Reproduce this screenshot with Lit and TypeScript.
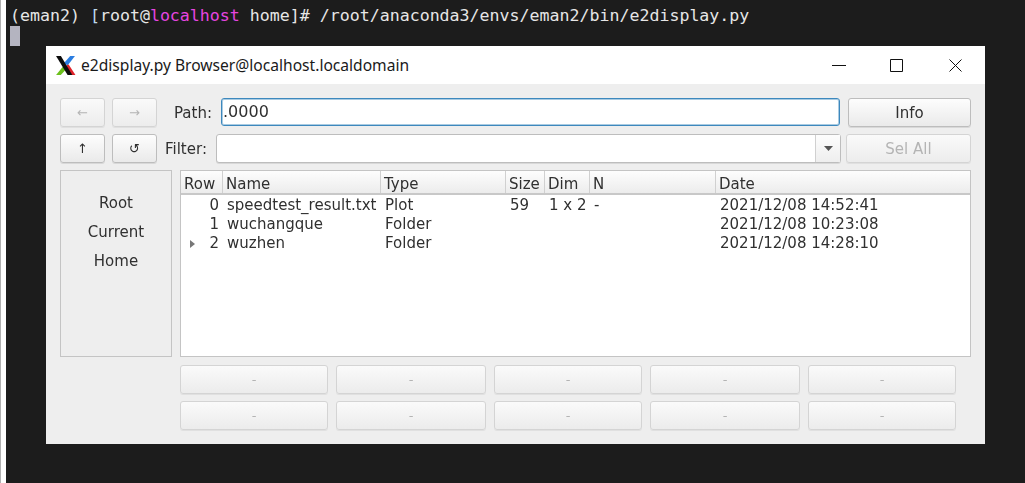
import { LitElement, html, css } from "lit";
import { customElement } from "lit/decorators.js";

const COLS = ["Row", "Name", "Type", "Size", "Dim", "N", "Date"];
const ROWS = [
  { row: "0", name: "speedtest_result.txt", type: "Plot", size: "59", dim: "1 x 2", n: "-", date: "2021/12/08 14:52:41", kids: false },
  { row: "1", name: "wuchangque", type: "Folder", size: "", dim: "", n: "", date: "2021/12/08 10:23:08", kids: false },
  { row: "2", name: "wuzhen", type: "Folder", size: "", dim: "", n: "", date: "2021/12/08 14:28:10", kids: true },
];

@customElement("app-root")
export class AppRoot extends LitElement {
  static styles = css`
    :host { display: block; width: 1025px; height: 483px; overflow: hidden; background: #1c1c1c; }
    .stage { display: flex; height: 483px; }
    .strip { width: 5px; flex: none; background: #fff; border-left: 1px solid #b0b0b0; }
    .term { flex: 1; min-width: 0; }
    .line { height: 20px; padding-left: 4px; font: 16.6px/20px "DejaVu Sans Mono", monospace; color: #e6e6e6; white-space: pre; margin-top: 6px; }
    .line .br { color: #bcd8ea; }
    .line .host { color: #e645e0; }
    .cursor { width: 10px; height: 20px; margin-left: 4px; background: #b4b4c0; }
    .win { width: 939px; height: 398px; margin-left: 40px; background: #eee; display: flex; flex-direction: column; }
    .title { height: 38px; flex: none; background: #fff; display: flex; align-items: center; padding-left: 9px; color: #1a1a1a; font: 15.6px/36px "Noto Sans", sans-serif; }
    .title .logo { width: 21px; height: 21px; margin-right: 5px; flex: none; }
    .title .name { flex: 1; }
    .ctl { display: flex; align-items: center; margin-right: 23px; }
    .ctl svg { display: block; }
    .ctl .min { width: 14px; height: 14px; margin-right: 44px; }
    .ctl .max { width: 13px; height: 13px; margin-right: 46px; }
    .ctl .cls { width: 13px; height: 13px; }
    .client { flex: 1; padding: 14px; display: flex; flex-direction: column; gap: 7px; font: 15px "DejaVu Sans", sans-serif; color: #303030; filter: blur(0.35px); }
    .bar { display: flex; height: 29px; flex: none; align-items: stretch; }
    button {
      box-sizing: border-box; margin: 0; padding: 0; font: inherit; color: #303030;
      border: 1px solid #bdbdbd; border-radius: 3px;
      background: linear-gradient(#fdfdfd, #eaeaea);
      box-shadow: 0 1px 0 #d8d8d8;
    }
    button:disabled { color: #b4b4b4; border-color: #d4d4d4; box-shadow: 0 1px 0 #e0e0e0; background: linear-gradient(#fafafa, #ececec); }
    .nav { width: 45px; flex: none; margin-right: 7px; font-size: 13px; }
    .lab { flex: none; align-self: center; }
    .lab.path { width: 47px; box-sizing: border-box; margin-left: 10px; }
    .lab.filter { width: 51px; box-sizing: border-box; margin-left: 1px; }
    .input { box-sizing: border-box; height: 28px; width: 619px; flex: none; background: #fff; border: 1px solid #3d88bd; border-radius: 3px; padding-left: 1px; line-height: 26px; box-shadow: 0 0 0 1px #a9cbe2 inset; font-size: 16px; }
    .info { width: 123px; flex: none; margin-left: 8px; }
    .combo { box-sizing: border-box; width: 625px; flex: none; background: #fff; border: 1px solid #bdbdbd; border-radius: 3px; display: flex; justify-content: flex-end; box-shadow: 0 1px 0 #d8d8d8; }
    .drop { width: 24px; border-left: 1px solid #d0d0d0; display: flex; align-items: center; justify-content: center; background: linear-gradient(#fdfdfd, #eeeeee); }
    .drop svg { width: 9px; height: 5px; }
    .selall { width: 125px; flex: none; margin-left: 5px; }
    .main { display: flex; gap: 8px; height: 187px; flex: none; }
    .places { box-sizing: border-box; width: 112px; flex: none; border: 1px solid #c4c4c4; padding-top: 17px; display: flex; flex-direction: column; align-items: center; }
    .places div { height: 29px; line-height: 31px; }
    .table { box-sizing: border-box; flex: 1; border: 1px solid #c4c4c4; background: #fff; display: flex; flex-direction: column; }
    .grid { display: grid; grid-template-columns: 42px 158px 125px 39px 45px 126px 1fr; }
    .head { height: 24px; box-sizing: border-box; background: linear-gradient(#fdfdfd, #ececec); border-bottom: 2px solid #c8c8c8; }
    .head div { height: 22px; padding-left: 3px; line-height: 26px; border-right: 1px solid #d0d0d0; box-sizing: border-box; white-space: nowrap; }
    .head div:last-child { border-right: none; }
    .rows { padding-top: 1px; }
    .row { height: 19px; line-height: 19px; }
    .row > div { padding-left: 4px; white-space: nowrap; }
    .row .num { padding: 0 4px 0 9px; display: flex; justify-content: space-between; align-items: center; box-sizing: border-box; }
    .row .num svg { width: 5px; height: 8px; flex: none; }
    .row .num span { margin-left: auto; }
    .grid5 { display: grid; grid-template-columns: 148px 150px 148px 150px 148px; gap: 7px 8px; margin-left: 120px; margin-top: 1px; }
    .grid5 button { height: 29px; font-size: 13px; }
  `;

  render() {
    return html`<div class="stage">
      <div class="strip"></div>
      <div class="term">
        <div class="line">(eman2) <span class="br">[</span>root@<span class="host">localhost</span> home]# /root/anaconda3/envs/eman2/bin/e2display.py</div>
        <div class="cursor"></div>
        <div class="win">
          <div class="title">
            <svg class="logo" viewBox="0 0 20 20">
              <path d="M12 10 L19 1 L14.5 1 L8.6 7.6 Z" fill="#2a7de1"/>
              <path d="M8 10.5 L1 19 L5.5 19 L11 13 Z" fill="#6cc01c"/>
              <path d="M10.5 10 L15.5 19 L19.5 19 L13 9 Z" fill="#e0222a"/>
              <path d="M1 1 L5.6 1 L16.5 19 L12 19 Z" fill="#0c0c0c"/>
            </svg>
            <span class="name">e2display.py Browser@localhost.localdomain</span>
            <div class="ctl">
              <svg class="min" viewBox="0 0 14 14"><path d="M0 7.5H14" stroke="#111" fill="none"/></svg>
              <svg class="max" viewBox="0 0 13 13"><path d="M.5 .5H12.5V12.5H.5Z" stroke="#111" fill="none"/></svg>
              <svg class="cls" viewBox="0 0 13 13"><path d="M.5 .5L12.5 12.5M12.5 .5L.5 12.5" stroke="#111" fill="none"/></svg>
            </div>
          </div>
          <div class="client">
            <div class="bar">
              <button class="nav" disabled>←</button>
              <button class="nav" disabled>→</button>
              <span class="lab path">Path:</span>
              <div class="input">.0000</div>
              <button class="info">Info</button>
            </div>
            <div class="bar">
              <button class="nav">↑</button>
              <button class="nav">↺</button>
              <span class="lab filter">Filter:</span>
              <div class="combo">
                <div class="drop"><svg viewBox="0 0 9 5"><path d="M0 0H9L4.5 5Z" fill="#555"/></svg></div>
              </div>
              <button class="selall" disabled>Sel All</button>
            </div>
            <div class="main">
              <div class="places"><div>Root</div><div>Current</div><div>Home</div></div>
              <div class="table">
                <div class="grid head">${COLS.map((c) => html`<div>${c}</div>`)}</div>
                <div class="rows">
                ${ROWS.map(
                  (r) => html`<div class="grid row">
                    <div class="num">
                      ${r.kids ? html`<svg viewBox="0 0 5 8"><path d="M0 0L5 4L0 8Z" fill="#777"/></svg>` : ""}
                      <span>${r.row}</span>
                    </div>
                    <div>${r.name}</div><div>${r.type}</div><div>${r.size}</div><div>${r.dim}</div><div>${r.n}</div><div>${r.date}</div>
                  </div>`
                )}
                </div>
              </div>
            </div>
            <div class="grid5">
              ${Array.from({ length: 10 }, () => html`<button disabled>-</button>`)}
            </div>
          </div>
        </div>
      </div>
    </div>`;
  }
}
